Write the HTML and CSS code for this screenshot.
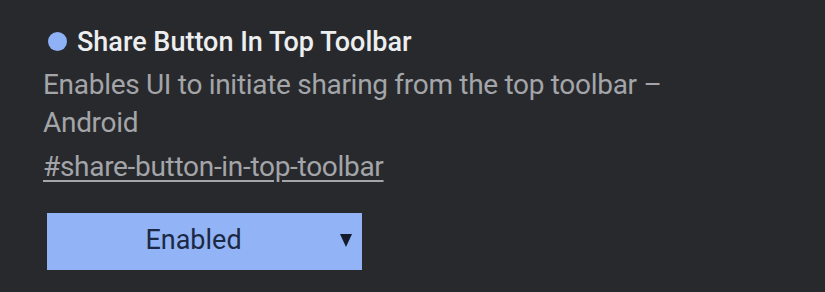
FILE: index.html
```html
<!DOCTYPE html>
<html>
<head>
<meta charset="utf-8">
<link rel="stylesheet" href="styles.css">
</head>
<body>
<div class="flag">
  <div class="title-row">
    <span class="dot"></span>
    <h2 class="title">Share Button In Top Toolbar</h2>
  </div>
  <p class="desc">Enables UI to initiate sharing from the top toolbar –<br>Android</p>
  <a class="link" href="#share-button-in-top-toolbar">#share-button-in-top-toolbar</a>
  <div class="select">
    <span class="select-label">Enabled</span>
    <svg class="arrow" width="12" height="13" viewBox="0 0 12 13"><polygon points="0,0 12,0 6,13" fill="#141c2c"/></svg>
  </div>
</div>
</body>
</html>
```
FILE: styles.css
```css
html, body {
  margin: 0;
  padding: 0;
  background: #28292d;
  height: 100%;
}
body {
  font-family: Roboto, "Liberation Sans", sans-serif;
}
.flag {
  padding: 26px 0 0 43px;
  display: flex;
  flex-direction: column;
  align-items: flex-start;
}
.title-row {
  display: flex;
  align-items: center;
  gap: 10px;
  padding-left: 5px;
}
.dot {
  width: 19px;
  height: 19px;
  border-radius: 50%;
  background: #8fb2f7;
  margin-top: -2px;
}
.title {
  margin: 0;
  font-size: 27px;
  font-weight: 500;
  color: #eceef0;
  line-height: 32px;
}
.desc {
  margin: 8px 0 0 0;
  font-size: 28px;
  letter-spacing: -0.3px;
  line-height: 38px;
  color: #a3a5a9;
}
.link {
  margin-top: 9px;
  font-size: 28px;
  letter-spacing: -0.3px;
  line-height: 32px;
  color: #a3a5a9;
  text-decoration: underline;
  text-underline-offset: 4px;
}
.select {
  margin: 30px 0 0 4px;
  width: 315px;
  height: 57px;
  background: #92b4f6;
  display: flex;
  align-items: center;
  padding-right: 10px;
  box-sizing: border-box;
}
.select-label {
  flex: 1;
  text-align: center;
  font-size: 27px;
  line-height: 31px;
  margin-top: -2px;
  color: #1c2944;
}
.arrow {
  display: block;
  flex: none;
  margin-top: -2px;
}
```
